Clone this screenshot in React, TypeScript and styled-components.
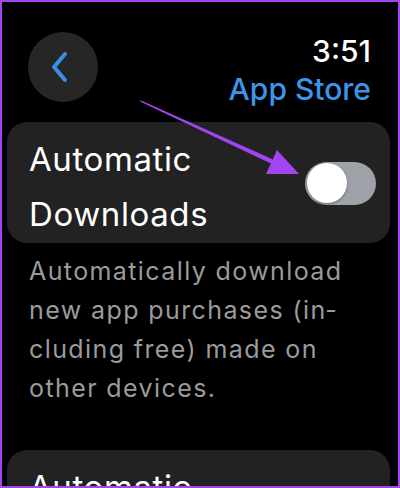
import React from 'react';
import styled, { createGlobalStyle } from 'styled-components';

const GlobalStyle = createGlobalStyle`
  html, body {
    margin: 0;
    padding: 0;
    background: #000;
  }
  body {
    font-family: Inter, "Noto Sans", sans-serif;
    -webkit-font-smoothing: antialiased;
  }
`;

const Frame = styled.div`
  position: relative;
  width: 400px;
  height: 488px;
  box-sizing: border-box;
  border: 2px solid #a244f2;
  background: #000;
  overflow: hidden;
`;

const Header = styled.header`
  display: flex;
  justify-content: space-between;
  align-items: flex-start;
  padding: 30px 27px 0 26px;
  height: 90px;
`;

const BackButton = styled.button`
  width: 70px;
  height: 70px;
  border: none;
  border-radius: 50%;
  background: #262626;
  display: flex;
  align-items: center;
  justify-content: center;
  padding: 0 6px 0 0;
  cursor: pointer;
`;

const TitleBlock = styled.div`
  display: flex;
  flex-direction: column;
  align-items: flex-end;
`;

const Clock = styled.div`
  color: #fff;
  font-size: 30px;
  font-weight: 500;
  line-height: 38px;
`;

const AppName = styled.div`
  color: #3b95ea;
  font-size: 30px;
  font-weight: 500;
  line-height: 38px;
`;

const Card = styled.section`
  margin: 0 8px 0 5px;
  background: #222222;
  border-radius: 20px;
  display: flex;
  align-items: center;
  justify-content: space-between;
  padding: 10px 14px 1px 22px;
  min-height: 121px;
  box-sizing: border-box;
`;

const Label = styled.div`
  color: #fff;
  font-size: 33px;
  line-height: 55px;
  letter-spacing: 0.6px;
  align-self: flex-start;
`;

const Track = styled.div<{ on: boolean }>`
  width: 71px;
  height: 43px;
  border-radius: 22px;
  background: ${p => (p.on ? '#34c759' : '#a0a2aa')};
  display: flex;
  align-items: center;
  justify-content: ${p => (p.on ? 'flex-end' : 'flex-start')};
  padding: 0 2px;
  margin-top: -8px;
  box-sizing: border-box;
  flex-shrink: 0;
`;

const Knob = styled.div`
  width: 40px;
  height: 40px;
  border-radius: 50%;
  background: #fff;
  box-shadow: 0 1px 3px rgba(0, 0, 0, 0.35);
`;

const Footnote = styled.p`
  margin: 0;
  padding: 9px 40px 42px 27px;
  color: #9b9b9b;
  font-size: 25px;
  line-height: 39px;
  letter-spacing: 1.4px;
  hyphens: manual;
`;

const Arrow = styled.svg`
  position: absolute;
  left: -2px;
  top: -2px;
  width: 400px;
  height: 488px;
  pointer-events: none;
`;

const Toggle = ({ on }: { on: boolean }) => (
  <Track on={on}>
    <Knob />
  </Track>
);

export default function App() {
  return (
    <>
      <GlobalStyle />
      <Frame>
        <Header>
          <BackButton aria-label="Back">
            <svg width="20" height="32" viewBox="0 0 20 32">
              <path
                d="M15 3 L4 16 L15 29"
                fill="none"
                stroke="#3a8ee8"
                strokeWidth="4"
                strokeLinecap="round"
                strokeLinejoin="round"
              />
            </svg>
          </BackButton>
          <TitleBlock>
            <Clock>3:51</Clock>
            <AppName>App Store</AppName>
          </TitleBlock>
        </Header>

        <Card>
          <Label>
            Automatic
            <br />
            Downloads
          </Label>
          <Toggle on={false} />
        </Card>
        <Footnote>
          Automatically download new app purchases (in{'\u00AD'}cluding free) made on other devices.
        </Footnote>

        <Card>
          <Label>
            Automatic
            <br />
            Updates
          </Label>
          <Toggle on />
        </Card>

        {/* callout arrow pointing at the switch */}
        <Arrow viewBox="0 0 400 488">
          <polygon points="140,100 141,102 274,165 272,159" fill="#a244f2" />
          <polygon points="299,174 277,150 266,174" fill="#a244f2" />
        </Arrow>
      </Frame>
    </>
  );
}
